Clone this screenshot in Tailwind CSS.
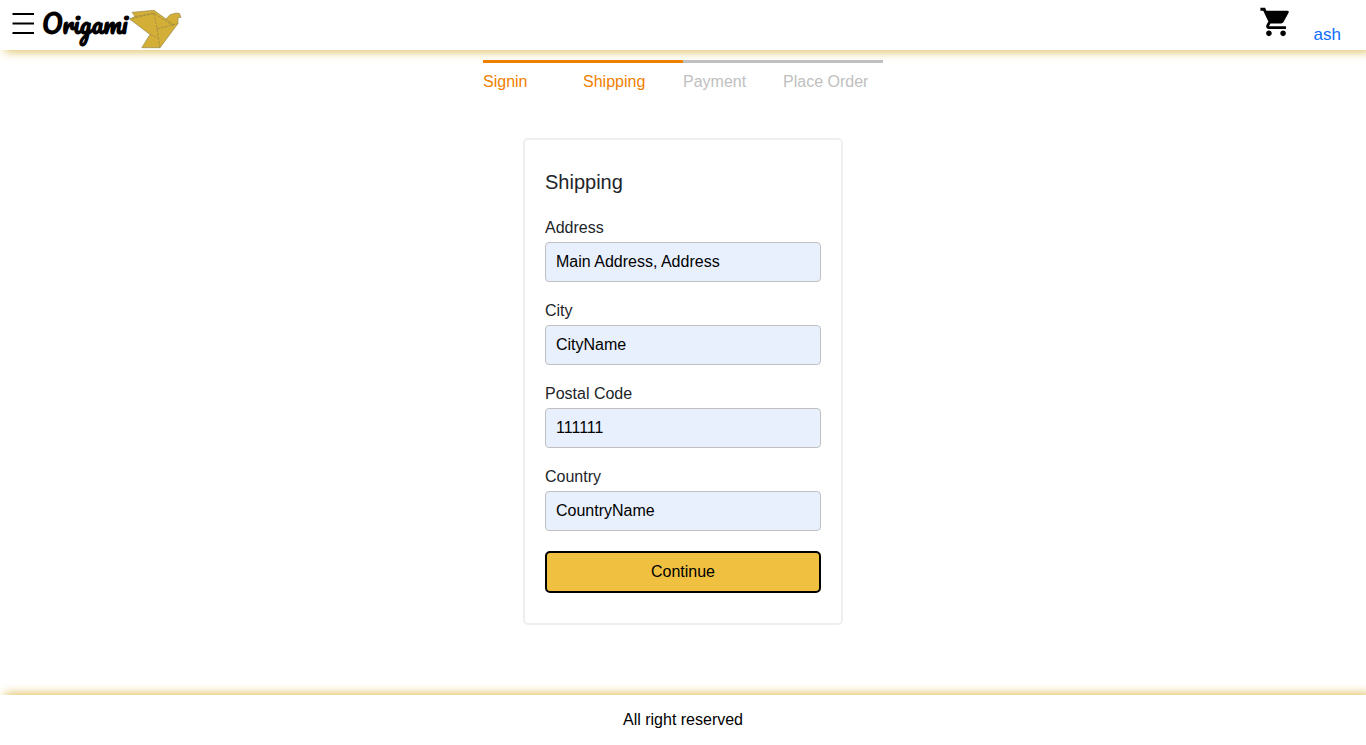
<!DOCTYPE html>
<html lang="en">
<head>
<meta charset="utf-8">
<meta name="viewport" content="width=device-width, initial-scale=1">
<title>Origami</title>
<script src="https://cdn.jsdelivr.net/npm/@tailwindcss/browser@4"></script>
</head>
<body class="flex min-h-screen flex-col bg-white font-['Liberation_Sans',Arial,sans-serif] text-base text-black">
<header class="flex h-[50px] items-center justify-between bg-white pr-[25px] pl-3 shadow-[5px_1px_10px_#dab94d]">
  <div class="flex items-center">
    <button type="button" aria-label="Open menu" class="h-6 w-[23px]">
      <svg viewBox="0 0 23 24" class="block h-6 w-[23px]"><path d="M.5 1h21.500M.5 10.500h21.500M.5 20h21.500" stroke="#000" stroke-width="2"/></svg>
    </button>
    <a href="#" class="ml-[7px] flex items-center">
      <span class="mb-1 w-[87px] text-[25px] leading-8 font-bold whitespace-nowrap font-['Pacifico',cursive]">Origami</span>
      <svg viewBox="0 0 54 40" class="mt-2 h-10 w-[54px]" aria-hidden="true">
        <g fill="#d4af37" stroke="#8d8048" stroke-width=".6" stroke-linejoin="round">
          <path d="M.5 10 6 7.500 3 3.300 25 1.300 37 10 41 5.700 47 4 50.500 4.500 52 8.500 49 8.500 49 14.500 31 38.700H12.700L21 25.500Z"/>
          <path d="M6 7.500 25 4.300 44 16.500M25 4.300 28 20 31 38.700M28 20 49 14.500M25 4.300 1 10M21 25.500 29 29M37 10 45 16" fill="none" stroke-dasharray="3 1"/>
        </g>
      </svg>
    </a>
  </div>
  <nav class="flex items-center">
    <a href="#" aria-label="Cart" class="mr-[21px] mb-1.5">
      <svg viewBox="0 0 24 24" class="block h-[34px] w-[34px]"><path d="M7 18c-1.100 0-1.990.9-1.990 2S5.900 22 7 22s2-.9 2-2-.9-2-2-2zM1 2v2h2l3.600 7.590-1.350 2.450c-.16.280-.25.610-.25.960 0 1.100.9 2 2 2h12v-2H7.420c-.14 0-.25-.11-.25-.25l.03-.12.9-1.630h7.450c.75 0 1.410-.41 1.750-1.030l3.580-6.490A1 1 0 0 0 20 4H5.210l-.94-2H1zm16 16c-1.100 0-1.990.9-1.990 2s.89 2 1.990 2 2-.9 2-2-.9-2-2-2z"/></svg>
    </a>
    <a href="#" class="mt-5 text-[17px] leading-6 text-[#0d6efd]">ash</a>
  </nav>
</header>
<main class="flex grow flex-col items-center px-4 pt-2.5 pb-[70px]">
  <ol class="grid w-full max-w-[400px] grid-cols-4 leading-6 text-[#c0c0c0]">
    <li class="border-t-[3px] border-[#f08000] pt-[7px] text-[#f08000]">Signin</li>
    <li class="border-t-[3px] border-[#f08000] pt-[7px] text-[#f08000]">Shipping</li>
    <li class="border-t-[3px] border-[#c0c0c0] pt-[7px]">Payment</li>
    <li class="border-t-[3px] border-[#c0c0c0] pt-[7px]">Place Order</li>
  </ol>
  <form class="mt-11 flex w-full max-w-[320px] flex-col gap-[17px] rounded-[5px] border-2 border-[#efefef] px-5 pt-7 pb-[30px] text-[#212529]">
    <h1 class="mb-[3px] text-xl leading-7">Shipping</h1>
    <div class="flex flex-col gap-0.5">
      <label for="address" class="leading-6">Address</label>
      <input id="address" type="text" value="Main Address, Address" class="h-10 w-full rounded border border-[#c0c0c0] bg-[#e8f0fe] px-2.5 text-black">
    </div>
    <div class="flex flex-col gap-0.5">
      <label for="city" class="leading-6">City</label>
      <input id="city" type="text" value="CityName" class="h-10 w-full rounded border border-[#c0c0c0] bg-[#e8f0fe] px-2.5 text-black">
    </div>
    <div class="flex flex-col gap-0.5">
      <label for="postal" class="leading-6">Postal Code</label>
      <input id="postal" type="text" value="111111" class="h-10 w-full rounded border border-[#c0c0c0] bg-[#e8f0fe] px-2.5 text-black">
    </div>
    <div class="flex flex-col gap-0.5">
      <label for="country" class="leading-6">Country</label>
      <input id="country" type="text" value="CountryName" class="h-10 w-full rounded border border-[#c0c0c0] bg-[#e8f0fe] px-2.5 text-black">
    </div>
    <button type="submit" class="mt-[3px] h-[42px] rounded-[5px] border-2 border-black bg-[#f0c040] text-black">Continue</button>
  </form>
</main>
<footer class="flex h-[50px] items-center justify-center bg-white shadow-[5px_-1px_10px_#dab94d]">All right reserved</footer>
</body>
</html>
